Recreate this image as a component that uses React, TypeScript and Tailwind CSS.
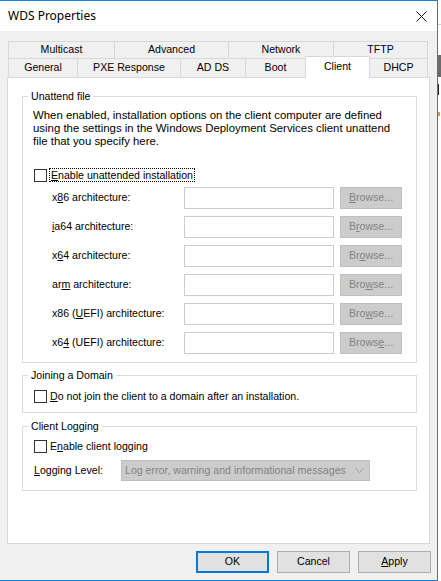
import React from "react";

const U = ({ children }: { children: React.ReactNode }) => (
  <span className="underline decoration-1 underline-offset-[1px]">{children}</span>
);

const Box = () => <div className="w-[13px] h-[13px] shrink-0 border border-[#333333] bg-white" />;

function Row({ label, browse }: { label: React.ReactNode; browse: React.ReactNode }) {
  return (
    <div className="flex items-center h-[22px]">
      <div className="w-[150px] pl-[18px] text-black">{label}</div>
      <div className="w-[150px] h-[22px] border border-[#cccccc] bg-white" />
      <div className="ml-[6px] w-[62px] h-[22px] border border-[#bfbfbf] bg-[#cccccc] text-[#838383] flex items-center justify-center">
        {browse}
      </div>
    </div>
  );
}

function Group({ title, className, children }: { title: string; className?: string; children: React.ReactNode }) {
  return (
    <fieldset className={"ml-[14px] w-[395px] border border-[#dcdcdc] " + (className ?? "")}>
      <legend className="ml-[5px] px-[3px] leading-[13px] h-[13px]">{title}</legend>
      {children}
    </fieldset>
  );
}

export default function App() {
  const row1 = [
    { t: "Multicast", w: "w-[106px]" },
    { t: "Advanced", w: "w-[114px]" },
    { t: "Network", w: "w-[105px]" },
    { t: "TFTP", w: "w-[95px] border-r" },
  ];
  return (
    <div className="w-[441px] h-[581px] flex bg-white font-['Liberation_Sans',Arial,sans-serif] text-[10.6px] text-black overflow-hidden">
      <div className="w-[438px] h-[581px] border-t border-b border-r border-[#1883d7] flex flex-col">
        {/* title bar */}
        <div className="h-[30px] bg-white flex items-center justify-between pl-[8px] pr-[10px]">
          <span className="font-['Noto_Sans','Open_Sans',sans-serif] text-[12px] text-black">WDS Properties</span>
          <svg width="11" height="11" viewBox="0 0 11 11">
            <path d="M0.5 0.5 L10.5 10.5 M10.5 0.5 L0.5 10.5" stroke="#111" strokeWidth="1" />
          </svg>
        </div>
        {/* body */}
        <div className="flex-1 bg-[#f0f0f0] pt-[10px] pl-[7px] flex flex-col">
          <div className="ml-[1px] flex h-[17px]">
            {row1.map((r) => (
              <div
                key={r.t}
                className={"h-[17px] border-t border-l border-[#d9d9d9] bg-[#f0f0f0] flex items-center justify-center " + r.w}
              >
                {r.t}
              </div>
            ))}
          </div>
          <div className="ml-[1px] flex items-end h-[19px]">
            <div className="w-[69px] h-[19px] border-t border-l border-[#d9d9d9] flex items-center justify-center">General</div>
            <div className="w-[103px] h-[19px] border-t border-l border-[#d9d9d9] flex items-center justify-center">PXE Response</div>
            <div className="w-[65px] h-[19px] border-t border-l border-[#d9d9d9] flex items-center justify-center">AD DS</div>
            <div className="w-[60px] h-[19px] border-t border-l border-[#d9d9d9] flex items-center justify-center">Boot</div>
            <div className="relative top-[1px] z-10 w-[65px] -mr-[1px] h-[22px] border-t border-l border-r border-[#d9d9d9] bg-white flex items-center justify-center pb-[2px]">
              Client
            </div>
            <div className="w-[59px] h-[19px] border-t border-l border-r border-[#d9d9d9] flex items-center justify-center">DHCP</div>
          </div>
          {/* panel */}
          <div className="w-[423px] h-[467px] border border-[#d9d9d9] bg-white flex flex-col">
            <Group title="Unattend file" className="mt-[12px]">
              <div className="pl-[11px] pt-[6px] pb-[8px]">
                <div className="-ml-[1px] leading-[13px] text-[11.4px]">
                  When enabled, installation options on the client computer are defined
                  <br />
                  using the settings in the Windows Deployment Services client unattend
                  <br />
                  file that you specify here.
                </div>
                <div className="mt-[20px] flex items-center h-[14px]">
                  <Box />
                  <span className="ml-[2px] px-[1px] h-[14px] leading-[12px] border border-dotted border-black">
                    <U>E</U>nable unattended installation
                  </span>
                </div>
                <div className="mt-[5px] flex flex-col gap-[7px]">
                  <Row label={<>x<U>8</U>6 architecture:</>} browse={<><U>B</U>rowse...</>} />
                  <Row label={<><U>i</U>a64 architecture:</>} browse={<>B<U>r</U>owse...</>} />
                  <Row label={<>x<U>6</U>4 architecture:</>} browse={<>Br<U>o</U>wse...</>} />
                  <Row label={<>ar<U>m</U> architecture:</>} browse={<>Bro<U>w</U>se...</>} />
                  <Row label={<>x86 (<U>U</U>EFI) architecture:</>} browse={<>Bro<U>w</U>se...</>} />
                  <Row label={<>x6<U>4</U> (UEFI) architecture:</>} browse={<>Brows<U>e</U>...</>} />
                </div>
              </div>
            </Group>
            <Group title="Joining a Domain" className="mt-[6px]">
              <div className="pl-[11px] pt-[8px] pb-[9px]">
                <div className="flex items-center h-[13px]">
                  <Box />
                  <span className="ml-[3px]">
                    <U>D</U>o not join the client to a domain after an installation.
                  </span>
                </div>
              </div>
            </Group>
            <Group title="Client Logging" className="mt-[7px]">
              <div className="pl-[11px] pt-[7px] pb-[9px]">
                <div className="flex items-center h-[13px]">
                  <Box />
                  <span className="ml-[3px]">
                    E<U>n</U>able client logging
                  </span>
                </div>
                <div className="mt-[7px] flex items-center h-[21px]">
                  <div className="w-[87px]">
                    <U>L</U>ogging Level:
                  </div>
                  <div className="w-[249px] h-[21px] border border-[#bfbfbf] bg-[#cccccc] text-[#838383] flex items-center justify-between pl-[3px] pr-[5px]">
                    <span>Log error, warning and informational messages</span>
                    <svg width="9" height="5" viewBox="0 0 9 5">
                      <path d="M0.5 0.5 L4.5 4.5 L8.5 0.5" fill="none" stroke="#9a9a9a" strokeWidth="1" />
                    </svg>
                  </div>
                </div>
              </div>
            </Group>
          </div>
          {/* buttons */}
          <div className="mt-[7px] flex justify-end pr-[6px] gap-[8px]">
            <div className="w-[73px] h-[22px] border-2 border-[#0078d7] bg-[#e1e1e1] flex items-center justify-center">OK</div>
            <div className="w-[73px] h-[22px] border border-[#adadad] bg-[#e1e1e1] flex items-center justify-center">Cancel</div>
            <div className="w-[73px] h-[22px] border border-[#adadad] bg-[#e1e1e1] flex items-center justify-center">
              <U>A</U>pply
            </div>
          </div>
        </div>
      </div>
      {/* strip of window behind */}
      <div className="w-[3px] flex flex-col bg-white">
        <div className="h-[24px]" />
        <div className="h-[1px] bg-[#d0d0d0]" />
        <div className="h-[30px]" />
        <div className="h-[22px] bg-[#6b6b6b]" />
        <div className="h-[7px]" />
        <div className="h-[11px] w-[1px] bg-[#222]" />
        <div className="h-[17px]" />
        <div className="h-[4px] w-[2px] bg-[#e8952a]" />
      </div>
    </div>
  );
}
